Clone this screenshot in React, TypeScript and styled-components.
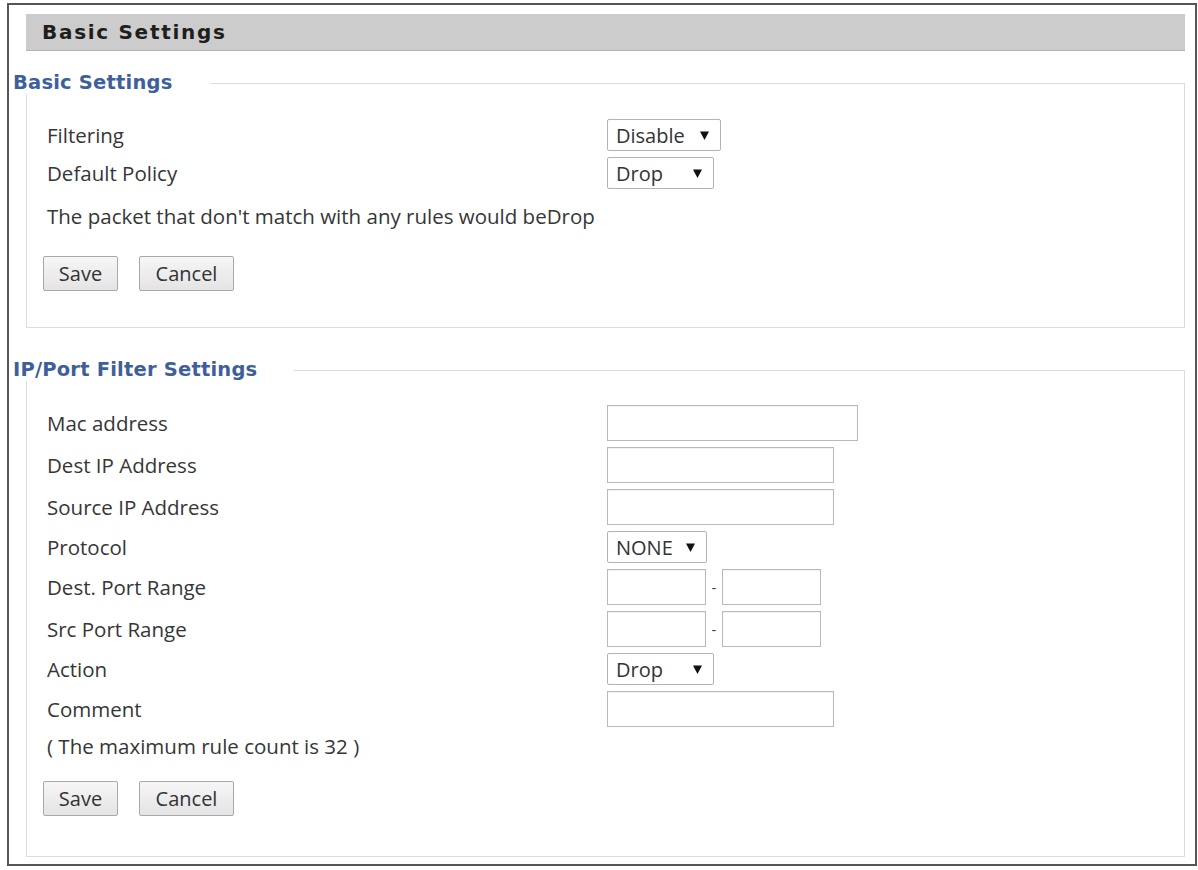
import React from "react";
import styled, { createGlobalStyle } from "styled-components";

const GlobalStyle = createGlobalStyle`
  html, body { margin: 0; padding: 0; background: #ffffff; }
  body { font-family: "Open Sans", "Liberation Sans", sans-serif; color: #333; }
  * { box-sizing: border-box; }
`;

const Frame = styled.div`
  margin: 3px 1px 0 7px;
  width: 1190px;
  height: 863px;
  border: 2px solid #555555;
  padding: 9px 10px 0 17px;
  display: flex;
  flex-direction: column;
`;

const HeaderBar = styled.div`
  height: 37px;
  background: #cccccc;
  border-bottom: 1px solid #b4b4b4;
  display: flex;
  align-items: center;
  padding-left: 16px;
  font-family: "DejaVu Sans", Verdana, sans-serif;
  font-weight: bold;
  font-size: 20px;
  color: #1e1e1e;
  letter-spacing: 1.7px;
`;

const Fieldset = styled.fieldset<{ $top: number }>`
  margin: ${(p) => p.$top}px 0 0 0;
  padding: 0;
  border: 1px solid #dcdcdc;
  min-width: 0;
`;

const Legend = styled.legend`
  margin-left: -14px;
  padding: 0 37px 0 0;
  font-family: "DejaVu Sans", Verdana, sans-serif;
  font-weight: bold;
  font-size: 19.5px;
  letter-spacing: 0.2px;
  line-height: 22px;
  color: #3f5f9c;
`;

const Body = styled.div<{ $pb: number }>`
  display: flex;
  flex-direction: column;
  padding: 0 0 ${(p) => p.$pb}px 20px;
`;

const Row = styled.div<{ $h: number; $mt: number }>`
  display: grid;
  grid-template-columns: 560px auto;
  align-items: center;
  height: ${(p) => p.$h}px;
  margin-top: ${(p) => p.$mt}px;
`;

const Label = styled.span`
  font-size: 20.5px;
  color: #363636;
`;

const Note = styled.div<{ $mt: number }>`
  height: 28px;
  line-height: 28px;
  margin-top: ${(p) => p.$mt}px;
  font-size: 20.5px;
  color: #363636;
`;

const Controls = styled.div`
  display: flex;
  align-items: center;
`;

const TextInput = styled.input<{ $w: number }>`
  width: ${(p) => p.$w}px;
  height: 36px;
  border: 1px solid #b9b9b9;
  box-shadow: inset 0 1px 1px rgba(0, 0, 0, 0.06);
  background: #fff;
  padding: 0 4px;
  font-size: 18px;
  font-family: inherit;
  margin: 0;
`;

const Dash = styled.span`
  width: 16px;
  text-align: center;
  font-size: 15px;
  color: #444;
`;

const SelectWrap = styled.div<{ $w: number }>`
  position: relative;
  width: ${(p) => p.$w}px;
  height: 32px;
`;

const Select = styled.select`
  appearance: none;
  -webkit-appearance: none;
  width: 100%;
  height: 100%;
  border: 1px solid #b3b3b3;
  border-radius: 2px;
  background: #fff;
  padding: 0 0 0 8px;
  font-family: "Open Sans", "Liberation Sans", sans-serif;
  font-size: 20px;
  color: #333;
  margin: 0;
  outline: none;
`;

const Arrow = styled.svg`
  position: absolute;
  right: 12px;
  top: 12px;
  width: 9px;
  height: 9px;
  pointer-events: none;
`;

const ButtonRow = styled.div<{ $mt: number }>`
  display: flex;
  gap: 21px;
  margin-top: ${(p) => p.$mt}px;
  margin-left: -4px;
`;

const Button = styled.button<{ $w: number }>`
  width: ${(p) => p.$w}px;
  height: 35px;
  border: 1px solid #a9a9a9;
  border-radius: 2px;
  background: linear-gradient(#f6f6f6, #e4e4e4);
  font-family: "Open Sans", "Liberation Sans", sans-serif;
  font-size: 20px;
  color: #333;
  padding: 0;
  margin: 0;
`;

type SelProps = { w: number; value: string; options: string[] };
const Dropdown = ({ w, value, options }: SelProps) => (
  <SelectWrap $w={w}>
    <Select defaultValue={value}>
      {options.map((o) => (
        <option key={o}>{o}</option>
      ))}
    </Select>
    <Arrow viewBox="0 0 9 9">
      <path d="M0 0.5 L9 0.5 L4.5 9 Z" fill="#111" />
    </Arrow>
  </SelectWrap>
);

export default function App() {
  return (
    <>
      <GlobalStyle />
      <Frame>
        <HeaderBar>Basic Settings</HeaderBar>
        <Fieldset $top={21}>
          <Legend>Basic Settings</Legend>
          <Body $pb={36}>
            <Row $h={32} $mt={25}>
              <Label>Filtering</Label>
              <Controls>
                <Dropdown w={114} value="Disable" options={["Disable", "Enable"]} />
              </Controls>
            </Row>
            <Row $h={32} $mt={6}>
              <Label>Default Policy</Label>
              <Controls>
                <Dropdown w={107} value="Drop" options={["Drop", "Accept"]} />
              </Controls>
            </Row>
            <Note $mt={13}>The packet that don't match with any rules would beDrop</Note>
            <ButtonRow $mt={26}>
              <Button $w={75}>Save</Button>
              <Button $w={95}>Cancel</Button>
            </ButtonRow>
          </Body>
        </Fieldset>
        <Fieldset $top={31}>
          <Legend>IP/Port Filter Settings</Legend>
          <Body $pb={40}>
            <Row $h={36} $mt={24}>
              <Label>Mac address</Label>
              <Controls>
                <TextInput $w={251} />
              </Controls>
            </Row>
            <Row $h={36} $mt={6}>
              <Label>Dest IP Address</Label>
              <Controls>
                <TextInput $w={227} />
              </Controls>
            </Row>
            <Row $h={36} $mt={6}>
              <Label>Source IP Address</Label>
              <Controls>
                <TextInput $w={227} />
              </Controls>
            </Row>
            <Row $h={32} $mt={6}>
              <Label>Protocol</Label>
              <Controls>
                <Dropdown w={100} value="NONE" options={["NONE", "TCP", "UDP", "ICMP"]} />
              </Controls>
            </Row>
            <Row $h={36} $mt={6}>
              <Label>Dest. Port Range</Label>
              <Controls>
                <TextInput $w={99} />
                <Dash>-</Dash>
                <TextInput $w={99} />
              </Controls>
            </Row>
            <Row $h={36} $mt={6}>
              <Label>Src Port Range</Label>
              <Controls>
                <TextInput $w={99} />
                <Dash>-</Dash>
                <TextInput $w={99} />
              </Controls>
            </Row>
            <Row $h={32} $mt={6}>
              <Label>Action</Label>
              <Controls>
                <Dropdown w={107} value="Drop" options={["Drop", "Accept"]} />
              </Controls>
            </Row>
            <Row $h={36} $mt={6}>
              <Label>Comment</Label>
              <Controls>
                <TextInput $w={227} />
              </Controls>
            </Row>
            <Note $mt={5}>( The maximum rule count is 32 )</Note>
            <ButtonRow $mt={21}>
              <Button $w={75}>Save</Button>
              <Button $w={95}>Cancel</Button>
            </ButtonRow>
          </Body>
        </Fieldset>
      </Frame>
    </>
  );
}
